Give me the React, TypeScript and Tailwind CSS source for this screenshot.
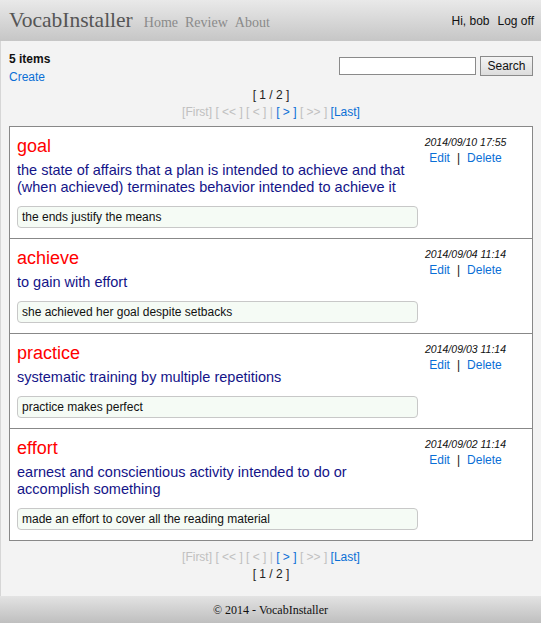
import React from "react";

interface Word {
  word: string;
  meaning: string;
  example: string;
  date: string;
}

const words: Word[] = [
  {
    word: "goal",
    meaning:
      "the state of affairs that a plan is intended to achieve and that (when achieved) terminates behavior intended to achieve it",
    example: "the ends justify the means",
    date: "2014/09/10 17:55",
  },
  {
    word: "achieve",
    meaning: "to gain with effort",
    example: "she achieved her goal despite setbacks",
    date: "2014/09/04 11:14",
  },
  {
    word: "practice",
    meaning: "systematic training by multiple repetitions",
    example: "practice makes perfect",
    date: "2014/09/03 11:14",
  },
  {
    word: "effort",
    meaning: "earnest and conscientious activity intended to do or accomplish something",
    example: "made an effort to cover all the reading material",
    date: "2014/09/02 11:14",
  },
];

const Pager = () => (
  <div className="text-[12px] leading-[17px] text-center">
    <span className="text-[#c0c0c0]">[First] [ &lt;&lt; ] [ &lt; ] | </span>
    <a className="text-[#0a6fd6]">[ &gt; ]</a>
    <span className="text-[#c0c0c0]"> [ &gt;&gt; ] </span>
    <a className="text-[#0a6fd6]">[Last]</a>
  </div>
);

const PageNo = () => (
  <div className="text-[12px] leading-[17px] text-center text-[#222]">[ 1 / 2 ]</div>
);

export default function App() {
  return (
    <div className="min-h-[623px] flex flex-col bg-[#f3f3f3] font-['Liberation_Sans',Arial,sans-serif]">
      {/* Header */}
      <div className="h-[41px] flex items-center justify-between px-[9px] bg-gradient-to-b from-[#e9e9e9] to-[#c6c6c6]">
        <div className="flex items-baseline font-['Liberation_Serif',serif]">
          <span className="text-[21.5px] text-[#555] leading-none mr-[11px]">VocabInstaller</span>
          <span className="text-[14px] text-[#8a8a8a] leading-none mr-[7px]">Home</span>
          <span className="text-[14px] text-[#8a8a8a] leading-none mr-[7px]">Review</span>
          <span className="text-[14px] text-[#8a8a8a] leading-none">About</span>
        </div>
        <div className="flex gap-[8px] text-[12px] text-[#111] mr-[-2px]">
          <span>Hi, bob</span>
          <span>Log off</span>
        </div>
      </div>

      {/* Main */}
      <div className="flex-1 border-l border-[#d6d6d6] px-[8px] pt-[9px] pb-[12px]">
        <div className="flex justify-between">
          <div className="text-[12px] leading-[18px]">
            <div className="font-bold text-[#111]">5 items</div>
            <a className="text-[#0a6fd6]">Create</a>
          </div>
          <div className="flex items-center gap-[4px] mt-[6px] h-[20px]">
            <input className="w-[137px] h-[18px] border border-[#8a8a8a] bg-white" />
            <button className="h-[20px] w-[53px] border border-[#8a8a8a] bg-gradient-to-b from-[#f4f4f4] to-[#dcdcdc] text-[12px] text-[#111]">
              Search
            </button>
          </div>
        </div>

        <div className="mt-[1px]">
          <PageNo />
          <Pager />
        </div>

        <div className="mt-[5px] border border-[#888] bg-white">
          {words.map((w, i) => (
            <div key={w.word} className={"flex " + (i > 0 ? "border-t border-[#888]" : "")}>
              <div className="w-[408px] pl-[7px] pt-[8px] pb-[10px]">
                <div className="text-[18px] leading-[22px] text-[#ff0000]">{w.word}</div>
                <div className="mt-[5px] text-[14.5px] leading-[17px] text-[#141488]">{w.meaning}</div>
                <div className="mt-[10px] h-[22px] flex items-center px-[4px] border border-[#c8c8c8] rounded-[4px] bg-[#f5fbf5] text-[12px] text-[#111]">
                  {w.example}
                </div>
              </div>
              <div className="flex-1 pt-[7px] pr-[19px] text-center">
                <div className="text-[10.5px] leading-[16px] italic text-[#111]">{w.date}</div>
                <div className="text-[12px] leading-[16px]">
                  <a className="text-[#0a6fd6]">Edit</a>
                  <span className="text-[#111] mx-[7px]">|</span>
                  <a className="text-[#0a6fd6]">Delete</a>
                </div>
              </div>
            </div>
          ))}
        </div>

        <div className="mt-[8px]">
          <Pager />
          <PageNo />
        </div>
      </div>

      {/* Footer */}
      <div className="h-[27px] flex items-center justify-center bg-gradient-to-b from-[#e3e3e3] to-[#bfbfbf] font-['Liberation_Serif',serif] text-[12px] text-[#111]">
        © 2014 - VocabInstaller
      </div>
    </div>
  );
}
